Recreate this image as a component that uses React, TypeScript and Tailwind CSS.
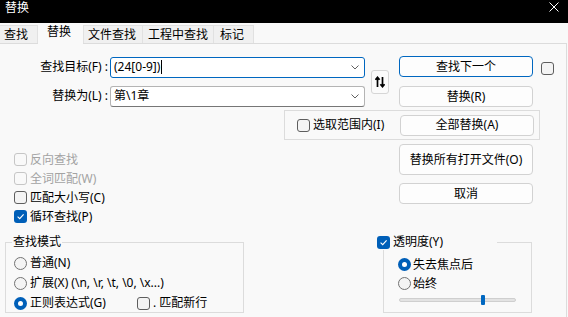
import React from 'react';

const Check = ({ checked = false, disabled = false }: { checked?: boolean; disabled?: boolean }) =>
  checked ? (
    <span className="flex h-[13px] w-[13px] shrink-0 items-center justify-center rounded-[3px] bg-[#005fb8]">
      <svg width="9" height="9" viewBox="0 0 9 9">
        <path d="M1.6 4.7 L3.7 6.7 L7.6 2.3" fill="none" stroke="#fff" strokeWidth="1.1" />
      </svg>
    </span>
  ) : disabled ? (
    <span className="block h-[13px] w-[13px] shrink-0 rounded-[3px] border border-[#c6c6c6]" />
  ) : (
    <span className="block h-[13px] w-[13px] shrink-0 rounded-[3px] border border-[#5e5e5e] bg-[#f4f4f4]" />
  );

const Radio = ({ checked = false }: { checked?: boolean }) =>
  checked ? (
    <span className="flex h-[13px] w-[13px] shrink-0 items-center justify-center rounded-full bg-[#005fb8]">
      <span className="h-[5px] w-[5px] rounded-full bg-white" />
    </span>
  ) : (
    <span className="block h-[13px] w-[13px] shrink-0 rounded-full border border-[#737373] bg-[#f4f4f4]" />
  );

const Btn = ({ children, focus = false, tall = false }: { children: React.ReactNode; focus?: boolean; tall?: boolean }) => (
  <div
    className={`flex w-[134px] items-center justify-center rounded-[4px] border bg-[#fdfdfd] ${
      focus ? 'border-[#0067c0]' : 'border-[#d2d2d2]'
    } ${tall ? 'h-[31px]' : 'h-[21px]'}`}
  >
    {children}
  </div>
);

const Combo = ({ value, focus = false }: { value: string; focus?: boolean }) => (
  <div
    className={`flex h-[21px] w-[255px] items-center rounded-[3px] border bg-white pl-[3px] pr-[5px] ${
      focus ? 'border-[#0067c0]' : 'border-[#b4b4b4] border-b-[#767676]'
    }`}
  >
    <span className="flex flex-1 items-center">
      {value}
      {focus && <span className="ml-[1px] inline-block h-[14px] w-px bg-black" />}
    </span>
    <svg width="8" height="5" viewBox="0 0 8 5">
      <path d="M0.5 0.5 L4 4 L7.5 0.5" fill="none" stroke="#606060" />
    </svg>
  </div>
);

const Tab = ({ label, cls }: { label: string; cls: string }) => (
  <div className={`flex h-[18px] items-center border-t border-[#e1e1e1] bg-[#f0f0f0] ${cls}`}>{label}</div>
);

export default function App() {
  return (
    <div className="h-[317px] w-[568px] overflow-hidden bg-[#f9f9f9] font-['Noto_Sans','Noto_Sans_CJK_SC',sans-serif] text-[12px] leading-[16px] text-black">
      {/* title bar */}
      <div className="flex h-[23px] items-start justify-between bg-black pl-[5px] pr-[9px] text-white">
        <span>替换</span>
        <svg className="mt-[2px]" width="10" height="10" viewBox="0 0 10 10">
          <path d="M0.5 0.5 L9.5 9.5 M9.5 0.5 L0.5 9.5" stroke="#fff" strokeWidth="1" />
        </svg>
      </div>

      {/* tabs */}
      <div className="flex h-[20px] items-end">
        <Tab label="查找" cls="w-[38px] border-r pl-[4px]" />
        <div className="relative z-10 -mb-[1px] h-[21px] w-[45px] bg-[#f9f9f9] pl-[9px] pt-[1px]">替换</div>
        <Tab label="文件查找" cls="w-[59px] border-l pl-[4px]" />
        <Tab label="工程中查找" cls="w-[71px] border-l pl-[5px]" />
        <Tab label="标记" cls="w-[41px] border-l border-r pl-[6px]" />
      </div>

      {/* panel */}
      <div className="h-[274px] w-[567px] border-t border-r border-[#dcdcdc]">
        {/* search / replace fields */}
        <div className="flex pt-[12px]">
          <div className="flex w-[389px] items-center">
            <div className="flex flex-col gap-[8px]">
              <div className="flex h-[21px] items-center">
                <span className="w-[110px] pr-[2px] text-right">查找目标(F) :</span>
                <Combo value="(24[0-9])" focus />
              </div>
              <div className="flex h-[21px] items-center">
                <span className="w-[110px] pr-[2px] text-right">替换为(L) :</span>
                <Combo value="第\1章" />
              </div>
            </div>
            <div className="ml-[6px] flex h-[24px] w-[18px] items-center justify-center rounded-[3px] border border-[#d6d6d6] bg-[#fbfbfb]">
              <svg width="10" height="12" viewBox="0 0 10 12">
                <path d="M2.5 11 V1.5 M0.4 3.8 L2.5 1.3 L4.6 3.8" fill="none" stroke="#000" strokeWidth="1.7" />
                <path d="M7.5 1 V10.5 M5.4 8.2 L7.5 10.7 L9.6 8.2" fill="none" stroke="#000" strokeWidth="1.7" />
              </svg>
            </div>
          </div>
          <div className="ml-[10px] flex flex-col gap-[9px]">
            <Btn focus>查找下一个</Btn>
            <Btn>替换(R)</Btn>
          </div>
          <div className="ml-[8px] mt-[6px] flex">
            <Check />
          </div>
        </div>

        {/* in selection */}
        <div className="ml-[284px] mt-[3px] flex h-[30px] w-[256px] items-center border border-[#dcdcdc]">
          <span className="ml-[12px] flex">
            <Check />
          </span>
          <span className="ml-[3px]">选取范围内(I)</span>
          <div className="ml-auto mr-[5px]">
            <Btn>全部替换(A)</Btn>
          </div>
        </div>

        {/* options + buttons */}
        <div className="flex">
          <div className="flex w-[399px] flex-col pl-[14px] pt-[10px]">
            <div className="flex h-[19px] items-center gap-[3px] text-[#a3a3a3]">
              <Check disabled />
              <span>反向查找</span>
            </div>
            <div className="flex h-[19px] items-center gap-[3px] text-[#a3a3a3]">
              <Check disabled />
              <span>全词匹配(W)</span>
            </div>
            <div className="flex h-[19px] items-center gap-[3px]">
              <Check />
              <span>匹配大小写(C)</span>
            </div>
            <div className="flex h-[19px] items-center gap-[3px]">
              <Check checked />
              <span>循环查找(P)</span>
            </div>
          </div>
          <div className="flex flex-col gap-[8px] pt-[4px]">
            <Btn tall>替换所有打开文件(O)</Btn>
            <Btn>取消</Btn>
          </div>
        </div>

        {/* group boxes */}
        <div className="mt-[8px] flex items-start">
          <fieldset className="ml-[5px] h-[79px] w-[239px] border border-[#dcdcdc] pl-[8px]">
            <legend className="-ml-[2px] px-[1px]">查找模式</legend>
            <div className="mt-[3px] flex flex-col">
              <div className="flex h-[20px] items-center gap-[3px]">
                <Radio />
                <span>普通(N)</span>
              </div>
              <div className="flex h-[20px] items-center gap-[3px]">
                <Radio />
                <span>扩展(X) (\n, \r, \t, \0, \x...)</span>
              </div>
              <div className="flex h-[20px] items-center">
                <Radio checked />
                <span className="ml-[3px] w-[107px]">正则表达式(G)</span>
                <Check />
                <span className="ml-[3px]">. 匹配新行</span>
              </div>
            </div>
          </fieldset>

          <fieldset className="ml-[139px] h-[79px] w-[149px] border border-[#dcdcdc] pl-[14px]">
            <legend className="-ml-[21px] w-[120px]">
              <span className="flex items-center gap-[3px]">
                <Check checked />
                <span>透明度(Y)</span>
              </span>
            </legend>
            <div className="mt-[5px] flex flex-col">
              <div className="flex h-[19px] items-center gap-[2px]">
                <Radio checked />
                <span>失去焦点后</span>
              </div>
              <div className="flex h-[19px] items-center gap-[2px]">
                <Radio />
                <span>始终</span>
              </div>
              <div className="relative ml-[1px] mt-[5px] h-[4px] w-[117px] rounded-[2px] border border-[#cfcfcf] bg-[#e3e3e3]">
                <span className="absolute left-[81px] top-[-4px] h-[10px] w-[4px] rounded-[1px] bg-[#0067c0]" />
              </div>
            </div>
          </fieldset>
        </div>
      </div>
    </div>
  );
}
